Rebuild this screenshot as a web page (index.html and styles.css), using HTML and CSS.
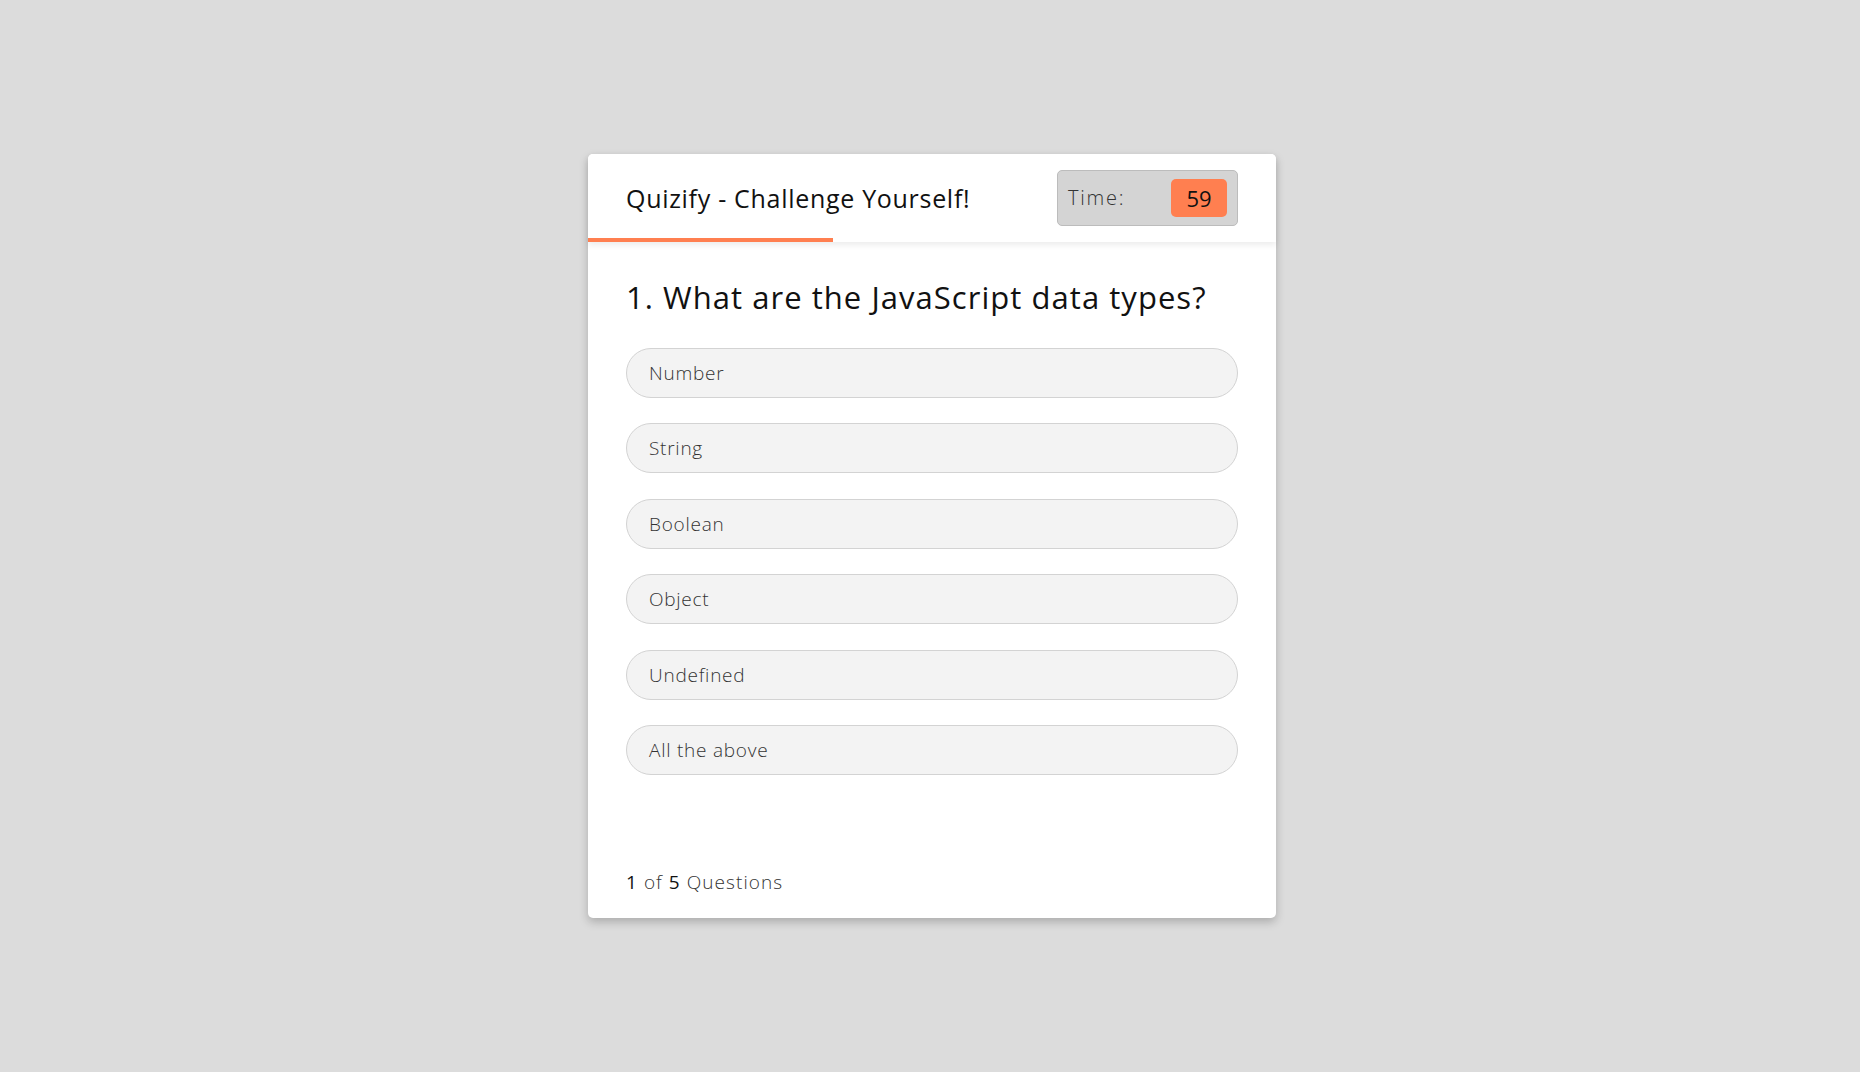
FILE: index.html
```html
<!DOCTYPE html>
<html lang="en">
<head>
<meta charset="utf-8">
<title>Quizify</title>
<link rel="stylesheet" href="styles.css">
</head>
<body>
  <main class="quiz-card">
    <header class="quiz-header">
      <h1 class="quiz-title">Quizify - Challenge Yourself!</h1>
      <div class="timer">
        <span class="timer-label">Time:</span>
        <span class="timer-value">59</span>
      </div>
      <div class="time-line"></div>
    </header>
    <section class="quiz-body">
      <h2 class="question">1. What are the JavaScript data types?</h2>
      <ul class="options">
        <li class="option">Number</li>
        <li class="option">String</li>
        <li class="option">Boolean</li>
        <li class="option">Object</li>
        <li class="option">Undefined</li>
        <li class="option">All the above</li>
      </ul>
    </section>
    <footer class="quiz-footer">
      <span class="total-que"><b>1</b> of <b>5</b> Questions</span>
    </footer>
  </main>
</body>
</html>
```
FILE: styles.css
```css
* {
  box-sizing: border-box;
  margin: 0;
  padding: 0;
}

body {
  min-height: 100vh;
  background: #dcdcdc;
  display: flex;
  align-items: center;
  justify-content: center;
  font-family: "Open Sans", "Noto Sans", sans-serif;
  color: #111;
}

.quiz-card {
  width: 688px;
  background: #fff;
  border-radius: 5px;
  box-shadow: 0 4px 10px rgba(0, 0, 0, 0.22);
  margin-left: 4px;
}

.quiz-header {
  position: relative;
  height: 88px;
  padding: 0 38px;
  display: flex;
  align-items: center;
  justify-content: space-between;
  background: #fff;
  border-radius: 5px 5px 0 0;
  box-shadow: 0 3px 6px rgba(0, 0, 0, 0.08);
}

.quiz-title {
  font-size: 25px;
  font-weight: 400;
  letter-spacing: 0.7px;
  color: #111;
}

.timer {
  width: 181px;
  height: 56px;
  padding: 0 10px 0 10px;
  display: flex;
  align-items: center;
  justify-content: space-between;
  background: #d4d4d4;
  border: 1px solid #bcbcbc;
  border-radius: 5px;
}

.timer-label {
  font-size: 20px;
  font-weight: 300;
  letter-spacing: 1.8px;
  color: #333;
}

.timer-value {
  width: 56px;
  height: 38px;
  display: flex;
  align-items: center;
  justify-content: center;
  background: #ff7f50;
  border-radius: 5px;
  font-size: 22px;
  font-weight: 400;
  color: #111;
}

.time-line {
  position: absolute;
  left: 0;
  bottom: 0;
  width: 245px;
  height: 4px;
  background: #ff7f50;
}

.quiz-body {
  padding: 37px 38px 0;
}

.question {
  font-size: 31px;
  line-height: 37px;
  font-weight: 400;
  letter-spacing: 1.04px;
  color: #111;
}

.options {
  list-style: none;
  margin-top: 32px;
  display: flex;
  flex-direction: column;
  gap: 25.6px;
}

.option {
  height: 50px;
  display: flex;
  align-items: center;
  padding-left: 22px;
  background: #f3f3f3;
  border: 1px solid #d3d3d3;
  border-radius: 25px;
  font-size: 19px;
  font-weight: 300;
  letter-spacing: 0.75px;
  color: #333;
}

.quiz-footer {
  padding: 96px 38px 24px;
  font-size: 19px;
  line-height: 23px;
  font-weight: 300;
  letter-spacing: 1.05px;
  color: #333;
}

.quiz-footer b {
  font-weight: 500;
  color: #111;
}
```
